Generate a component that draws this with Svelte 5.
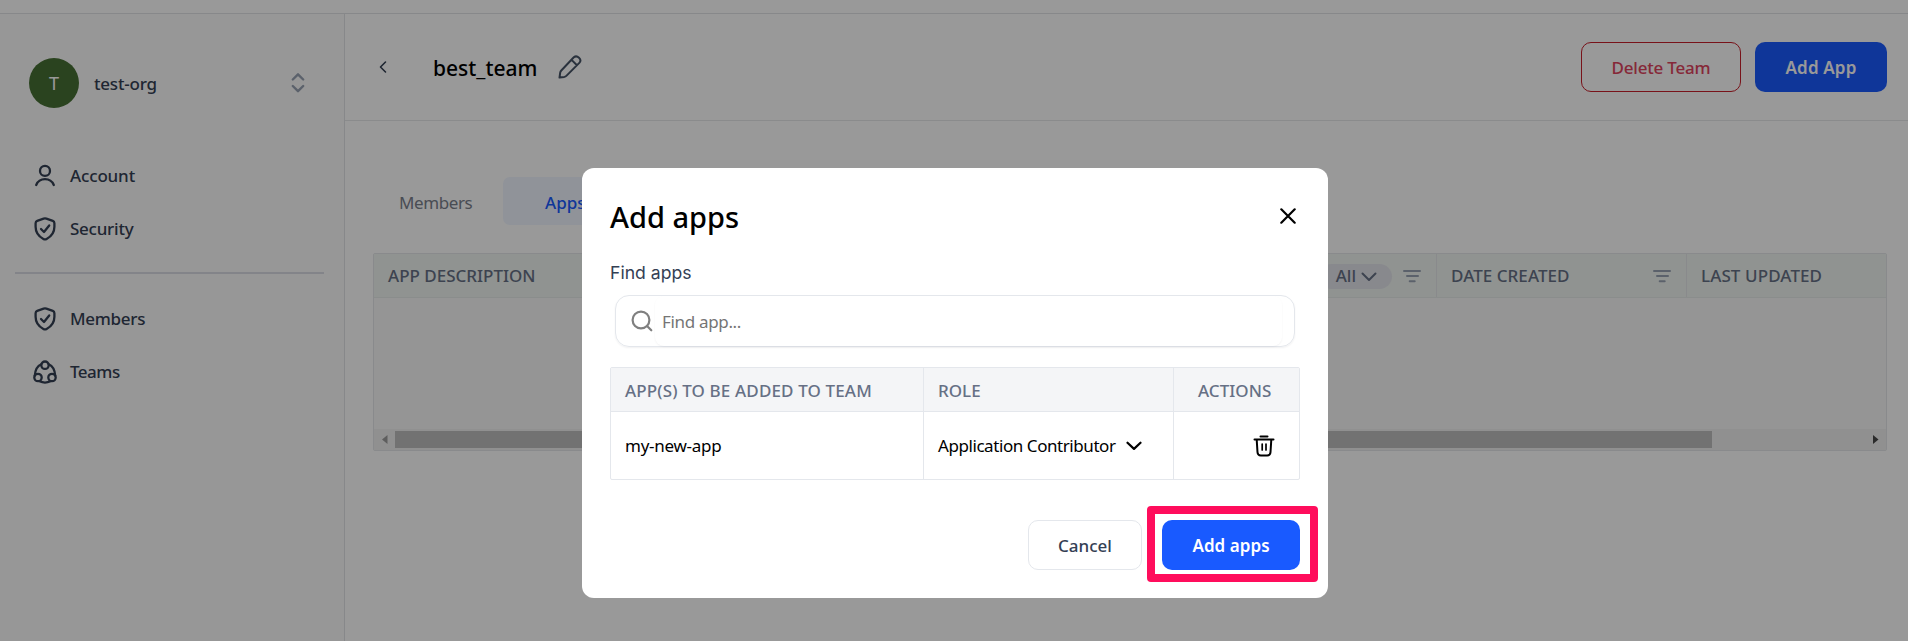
<script>
  const columns = ['APP DESCRIPTION', 'ROLE', 'DATE CREATED', 'LAST UPDATED'];
  const account = [
    { label: 'Account', icon: 'user', track: -0.15 },
    { label: 'Security', icon: 'shield', track: -0.25 }
  ];
  const org = [
    { label: 'Members', icon: 'shield', track: -0.3 },
    { label: 'Teams', icon: 'teams', track: -0.5 }
  ];
</script>

{#snippet filterIcon()}
  <svg class="filter" width="20" height="14" viewBox="0 0 20 14"><path d="M2 2h16M5 7h11M7.7 12.2h5" /></svg>
{/snippet}

{#snippet navItem(item)}
  <a class="nav-item" href="#top">
    <svg width="26" height="26" viewBox="0 0 26 26">
      {#if item.icon === 'user'}
        <circle cx="13" cy="7.9" r="5" />
        <path d="M4.2 22C6 17.8 9 16.2 13 16.2S20 17.8 21.800 22" />
      {:else if item.icon === 'shield'}
        <path d="M11.600 2.700 5.200 4.900C4.100 5.300 3.600 6.100 3.600 7.200V10.700C3.600 16.500 6.600 20.400 11.400 22.900Q13 23.800 14.600 22.900C19.400 20.400 22.400 16.500 22.400 10.700V7.200C22.400 6.100 21.900 5.300 20.800 4.900L14.400 2.700Q13 2.200 11.600 2.700Z" />
        <path d="M9 13 12 16 17.200 9.500" />
      {:else}
        <circle cx="13" cy="6.200" r="3.700" />
        <circle cx="6" cy="18.500" r="3.700" />
        <circle cx="20" cy="18.500" r="3.700" />
        <path d="M9.300 5.200C5.500 6.800 3.200 10.800 2.800 16.600M16.700 5.200C20.500 6.800 22.800 10.800 23.200 16.600M7.500 22.300Q13 24.800 18.500 22.300" />
      {/if}
    </svg>
    <span style="letter-spacing: {item.track}px">{item.label}</span>
  </a>
{/snippet}

<div class="page">
  <div class="topbar"></div>
  <div class="body">
    <aside>
      <div class="org">
        <div class="avatar">T</div>
        <span class="org-name">test-org</span>
        <svg class="sorter" width="16" height="22" viewBox="0 0 16 22"><path d="M2.800 7.500 8 2.300 13.200 7.500M2.800 14 8 19.200 13.200 14" /></svg>
      </div>
      <nav>{#each account as item}{@render navItem(item)}{/each}</nav>
      <div class="rule"></div>
      <nav>{#each org as item}{@render navItem(item)}{/each}</nav>
    </aside>

    <main>
      <header>
        <svg class="back" width="10" height="14" viewBox="0 0 10 14"><path d="M7.500 2 2.500 7 7.500 12" /></svg>
        <h1>best_team</h1>
        <svg class="pencil" width="26" height="26" viewBox="0 0 26 26"><path d="M16.800 3.300Q19.300 1.200 22 3.700T22.300 8.900L9.600 21.600Q8.600 22.600 7.300 22.900L2.500 23.600 3.200 18.700Q3.400 17.500 4.300 16.500ZM14.600 5.900 19.700 11" /></svg>
        <div class="actions">
          <button class="delete">Delete Team</button>
          <button class="primary add">Add App</button>
        </div>
      </header>

      <div class="tabs">
        <div class="tab">Members</div>
        <div class="tab active">Apps</div>
      </div>

      <div class="grid">
        <div class="grid-head">
          {#each columns as name, i}
            <div class="cell c{i}">
              <span>{name}</span>
              {#if i === 1}
                <span class="pill">All<svg width="16" height="10" viewBox="0 0 16 10"><path d="M1.500 1.500 8 8 14.500 1.500" /></svg></span>
              {/if}
              {#if i === 1 || i === 2}{@render filterIcon()}{/if}
            </div>
          {/each}
        </div>
        <div class="grid-body"></div>
        <div class="scroll">
          <svg width="6" height="9" viewBox="0 0 6 9"><path d="M5.500 0V9L0 4.500Z" fill="#9d9d9d" /></svg>
          <div class="thumb"></div>
          <svg class="right" width="6" height="9" viewBox="0 0 6 9"><path d="M0 0V9L5.500 4.500Z" fill="#484848" /></svg>
        </div>
      </div>
    </main>
  </div>
</div>

<div class="overlay"></div>
<section class="modal" role="dialog" aria-label="Add apps">
  <div class="modal-head">
    <h2>Add apps</h2>
    <svg width="16" height="16" viewBox="0 0 16 16"><path d="M1.300 1.300 14.700 14.700M14.700 1.300 1.300 14.700" /></svg>
  </div>
  <div class="label">Find apps</div>
  <div class="search">
    <svg width="22" height="22" viewBox="0 0 22 22"><circle cx="10" cy="10" r="8.400" /><path d="M16 16 20.300 20.300" /></svg>
    <div class="field">Find app...</div>
  </div>
  <div class="table">
    <div class="row th">
      <div class="t0">APP(S) TO BE ADDED TO TEAM</div>
      <div class="t1">ROLE</div>
      <div class="t2">ACTIONS</div>
    </div>
    <div class="row td">
      <div class="t0">my-new-app</div>
      <div class="t1">
        <span>Application Contributor</span>
        <svg class="chev" width="16" height="10" viewBox="0 0 16 10"><path d="M1.500 1.700 8 7.900 14.500 1.700" /></svg>
      </div>
      <div class="t2">
        <svg class="trash" width="22" height="22" viewBox="0 0 22 22"><path d="M1.500 4.500H20.500M7.500 1.600H14.500M3.700 4.500 4.500 17.200Q4.700 20.400 7.800 20.400H14.200Q17.300 20.400 17.500 17.200L18.300 4.500" /><path class="thin" d="M9.200 9V15M13 9V15" /></svg>
      </div>
    </div>
  </div>
  <div class="foot">
    <button class="cancel">Cancel</button>
    <div class="highlight"><button class="primary confirm">Add apps</button></div>
  </div>
</section>

<style>
  :global(body) { margin: 0; overflow: hidden; background: #fff; }
  :global(#app) { position: relative; }
  .page, .modal { font-family: "Noto Sans", "Open Sans", sans-serif; font-size: 17px; line-height: 24px; }
  .page *, .modal, .modal * { box-sizing: border-box; }
  svg { display: block; flex: none; fill: none; stroke: currentColor; stroke-width: 2; stroke-linecap: round; stroke-linejoin: round; }
  button { font: inherit; font-weight: 500; height: 50px; padding: 2px 0 0; border: 1px solid transparent; border-radius: 10px; background: transparent; }
  .primary { background: #195aff; color: #fff; font-weight: 600; }

  .page { display: flex; flex-direction: column; height: 641px; }
  .topbar { height: 14px; flex: none; border-bottom: 1px solid #e2e3e6; }
  .body { display: flex; flex: 1; min-height: 0; }

  aside { width: 345px; flex: none; background: #fcfcfc; border-right: 1px solid #e2e3e6; color: #344054; font-weight: 500; }
  .org { display: flex; align-items: center; height: 50px; margin: 44px 38px 0 29px; }
  .avatar { width: 50px; height: 50px; border-radius: 50%; background: #477034; color: #fff; text-align: center; line-height: 51px; font-size: 18px; font-weight: 400; }
  .org-name { margin-left: 15px; flex: 1; letter-spacing: -0.2px; padding-top: 2px; }
  .sorter { color: #98a2b3; stroke-width: 2.400; margin-top: -1px; }
  nav { display: flex; flex-direction: column; }
  .org + nav { padding-top: 41px; }
  .nav-item { display: flex; align-items: center; height: 53px; padding-left: 32px; gap: 12px; color: #344054; text-decoration: none; }
  .nav-item svg { stroke-width: 2.300; }
  .rule { height: 2px; margin: 17px 20px 18px 15px; background: #dbdce4; }

  main { flex: 1; min-width: 0; }
  header { display: flex; align-items: center; height: 107px; padding: 0 21px 0 33px; border-bottom: 1px solid #e7e8ea; }
  .back { color: #344054; stroke-width: 1.600; }
  h1 { margin: 1px 20px 0 45px; font-size: 21px; line-height: 30px; font-weight: 500; color: #000; }
  .pencil { color: #475467; stroke-width: 2; }
  .actions { display: flex; gap: 14px; margin-left: auto; }
  .delete { width: 160px; border-color: #c81e2a; color: #e0445e; letter-spacing: -0.2px; }
  .add { width: 132px; letter-spacing: 0.150px; }

  .tabs { display: flex; margin: 56px 0 28px 28px; height: 48px; line-height: 51px; color: #7a808c; }
  .tab { width: 130px; padding-left: 26px; letter-spacing: -0.400px; }
  .tab.active { padding-left: 42px; border-radius: 7px; background: #f0f5ff; color: #195aff; font-weight: 500; letter-spacing: 0; }

  .grid { margin: 0 21px 0 28px; height: 198px; border: 1px solid #e4e7ea; border-radius: 2px; background: #f9f9f9; display: flex; flex-direction: column; }
  .grid-head { display: flex; height: 44px; background: #f0f5f2; border-bottom: 1px solid #e7ecea; color: #667085; font-weight: 500; }
  .cell { display: flex; align-items: center; height: 43px; padding: 1px 14px 0 14px; border-right: 1px solid #e4e7ea; }
  .cell:last-child { border-right: 0; }
  .c0 { width: 563px; }
  .c1 { width: 500px; }
  .c2 { width: 250px; letter-spacing: 0.050px; }
  .c3 { letter-spacing: 0.100px; }
  .pill { display: flex; align-items: center; gap: 5px; margin-left: auto; height: 25px; padding: 0 15px 0 17px; border-radius: 13px; background: #e3e5eb; font-weight: 500; }
  .pill svg { stroke-width: 2; margin-top: 1px; }
  .filter { color: #98a2b3; margin-left: auto; }
  .pill + .filter { margin-left: 10px; }
  .grid-body { flex: 1; }
  .scroll { display: flex; align-items: center; height: 21px; background: #f1f1f1; padding: 0 7px 0 8px; }
  .scroll svg { stroke: none; }
  .thumb { width: 1317px; height: 17px; margin-left: 7px; background: #bfbfbf; }
  .right { margin-left: auto; }

  .overlay { position: fixed; inset: 0; background: rgba(0, 0, 0, 0.4); }

  .modal { position: absolute; left: 582px; top: 168px; width: 746px; height: 430px; padding: 0 28px; border-radius: 12px; background: #fff; display: flex; flex-direction: column; }
  .modal-head { display: flex; justify-content: space-between; align-items: center; height: 95px; padding: 0 4px 0 0; color: #000; }
  h2 { margin: 3px 0 0; font-size: 29px; line-height: 40px; font-weight: 500; }
  .modal-head svg { stroke-width: 2.200; margin-top: 1px; }
  .label { font-family: Inter, sans-serif; font-size: 17.600px; line-height: 20px; height: 32px; color: #344054; }
  .search { display: flex; align-items: center; height: 52px; margin: 0 5px; padding: 0 12px 0 15px; border: 1px solid #e4e7ec; border-radius: 14px; box-shadow: 0 1px 2px rgba(16, 24, 40, 0.060); color: #808080; }
  .search svg { stroke-width: 2.200; }
  .field { flex: 1; height: 50px; margin-left: 2px; padding-left: 7px; border-radius: 9px; box-shadow: 0 1px 2px rgba(16, 24, 40, 0.050); line-height: 52px; letter-spacing: -0.330px; color: #757575; }
  .table { height: 113px; margin-top: 20px; border: 1px solid #e4e7ec; border-radius: 2px; }
  .row { display: flex; }
  .row > div { display: flex; align-items: center; padding-left: 14px; border-right: 1px solid #e4e7ec; }
  .row > div:last-child { border-right: 0; }
  .t0 { width: 313px; }
  .t1 { width: 250px; }
  .t2 { flex: 1; }
  .th { height: 44px; padding: 0; background: #f4f5f7; border-bottom: 1px solid #e4e7ec; color: #667085; font-weight: 500; }
  .th > div { padding-top: 2px; }
  .th .t0 { letter-spacing: 0.140px; }
  .th > .t2 { padding-left: 24px; letter-spacing: 0.050px; }
  .td { height: 67px; color: #000; }
  .td .t0 { letter-spacing: -0.260px; }
  .td .t1 span { letter-spacing: -0.430px; }
  .chev { margin-left: 10px; stroke-width: 2.200; }
  .td > .t2 { padding-left: 79px; }
  .thin { stroke-width: 1.700; }
  .foot { display: flex; justify-content: flex-end; margin-top: 26px; margin-right: -18px; }
  .cancel { width: 114px; margin-top: 14px; border-color: #e4e7ec; color: #344054; }
  .highlight { margin-left: 5px; width: 171px; height: 76px; padding: 6px 0 0 7px; border: 8px solid #ff0d5c; border-radius: 4px; }
  .confirm { display: block; width: 138px; letter-spacing: 0.050px; }
</style>
